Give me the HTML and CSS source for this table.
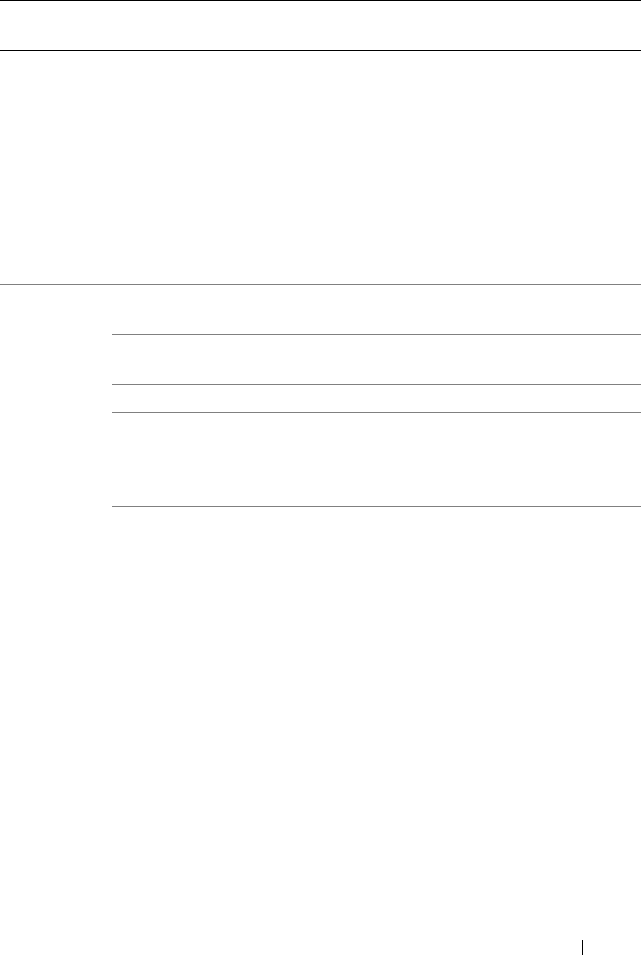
FILE: index.html
```html
<!DOCTYPE html>
<html lang="en">
<head>
<meta charset="utf-8">
<title>Table</title>
<link rel="stylesheet" href="styles.css">
</head>
<body>
<div class="page">
  <div class="head-row"></div>
  <div class="intro-row"></div>
  <div class="group">
    <div class="group-label"></div>
    <div class="group-rows">
      <div class="sub-row r1"></div>
      <div class="sub-row r2"></div>
      <div class="sub-row r3"></div>
      <div class="sub-row r4"></div>
    </div>
  </div>
  <div class="footer">
    <div class="footer-rule"></div>
  </div>
</div>
</body>
</html>
```
FILE: styles.css
```css
html, body {
  margin: 0;
  padding: 0;
  background: #ffffff;
  font-family: "Liberation Sans", Arial, sans-serif;
}
.page {
  width: 641px;
  height: 955px;
  display: flex;
  flex-direction: column;
  overflow: hidden;
}
.head-row {
  height: 49px;
  border-top: 1px solid #000000;
  border-bottom: 1px solid #000000;
}
.intro-row {
  height: 233px;
}
.group {
  display: grid;
  grid-template-columns: 112px 1fr;
  border-top: 1px solid #808080;
}
.sub-row {
  border-bottom: 1px solid #808080;
}
.r1 { height: 49px; }
.r2 { height: 49px; }
.r3 { height: 27px; }
.r4 { height: 93px; }
.footer {
  margin-top: auto;
  height: 15px;
  display: flex;
  padding-left: 582px;
}
.footer-rule {
  width: 1px;
  height: 15px;
  background: #000000;
}
```
